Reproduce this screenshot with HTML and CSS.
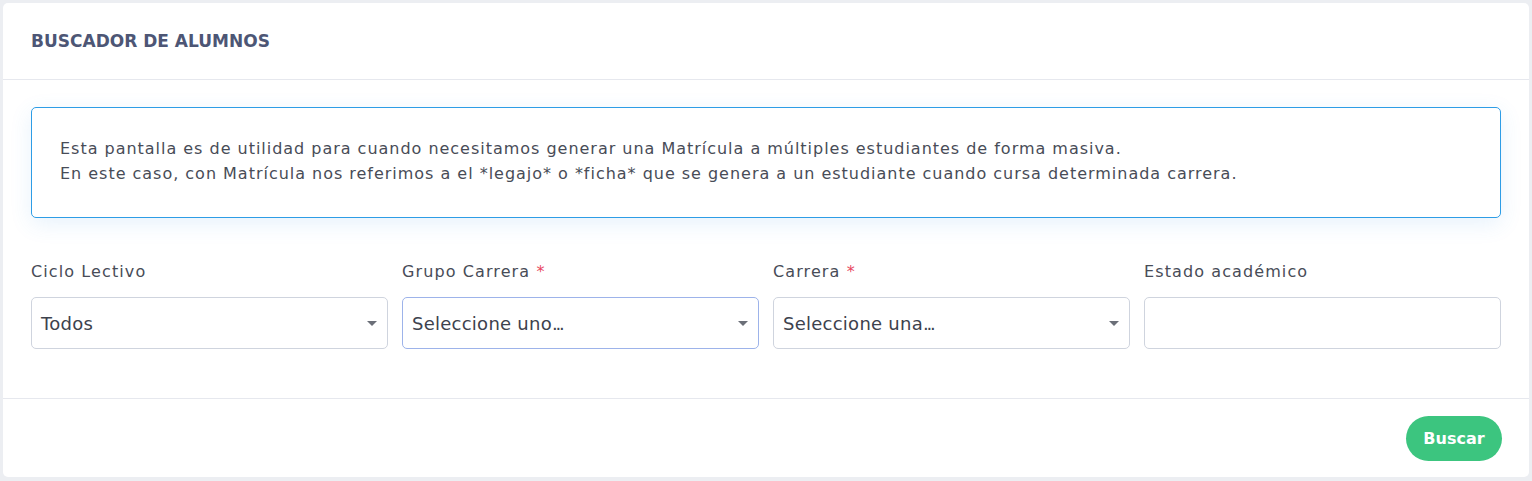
FILE: index.html
```html
<!DOCTYPE html>
<html lang="es">
<head>
<meta charset="utf-8">
<title>Buscador de alumnos</title>
<link rel="stylesheet" href="styles.css">
</head>
<body>
<div class="card">
  <div class="card-header">
    <h1 class="card-title">BUSCADOR DE ALUMNOS</h1>
  </div>
  <div class="card-body">
    <div class="alert">
      <p>Esta pantalla es de utilidad para cuando necesitamos generar una Matrícula a múltiples estudiantes de forma masiva.</p>
      <p>En este caso, con Matrícula nos referimos a el *legajo* o *ficha* que se genera a un estudiante cuando cursa determinada carrera.</p>
    </div>
    <div class="form-row">
      <div class="form-group">
        <label class="label">Ciclo Lectivo</label>
        <div class="select">
          <span class="select-text">Todos</span>
          <span class="caret"></span>
        </div>
      </div>
      <div class="form-group">
        <label class="label">Grupo Carrera <span class="req">*</span></label>
        <div class="select focused">
          <span class="select-text">Seleccione uno<span class="dots">...</span></span>
          <span class="caret"></span>
        </div>
      </div>
      <div class="form-group">
        <label class="label">Carrera <span class="req">*</span></label>
        <div class="select">
          <span class="select-text">Seleccione una<span class="dots">...</span></span>
          <span class="caret"></span>
        </div>
      </div>
      <div class="form-group">
        <label class="label">Estado académico</label>
        <div class="select empty"></div>
      </div>
    </div>
  </div>
  <div class="card-footer">
    <button class="btn-primary">Buscar</button>
  </div>
</div>
</body>
</html>
```
FILE: styles.css
```css
* { box-sizing: border-box; }
html, body { margin: 0; padding: 0; }
body {
  background: #eceef2;
  font-family: "DejaVu Sans", "Noto Sans", sans-serif;
  color: #484c57;
  padding: 3px 3px 4px 3px;
  height: 481px;
  overflow: hidden;
}
.card {
  background: #ffffff;
  border-radius: 5px;
  height: 474px;
  display: flex;
  flex-direction: column;
}
.card-header {
  height: 77px;
  padding: 0 28px;
  display: flex;
  align-items: center;
  border-bottom: 1px solid #e6e8ee;
}
.card-title {
  margin: 0;
  font-size: 17px;
  font-weight: 700;
  color: #4d5675;
  padding-bottom: 1px;
}
.card-body {
  padding: 27px 28px 0 28px;
  height: 319px;
  border-bottom: 1px solid #e6e8ee;
}
.alert {
  border: 1px solid #2e9de6;
  border-radius: 5px;
  padding: 28px 28px;
  height: 111px;
  box-shadow: 0 6px 22px rgba(60, 150, 230, 0.12);
  font-size: 16px;
  line-height: 25px;
  letter-spacing: 0.98px;
  color: #484c57;
}
.alert p { margin: 0; }
.form-row {
  display: grid;
  grid-template-columns: repeat(4, 1fr);
  column-gap: 14px;
  margin-top: 42px;
}
.form-group {
  display: flex;
  flex-direction: column;
}
.label {
  font-size: 16px;
  line-height: 24px;
  letter-spacing: 1.1px;
  color: #484c57;
  margin-bottom: 13px;
}
.req { color: #e8475f; }
.select {
  height: 52px;
  border: 1px solid #cfd4de;
  border-radius: 5px;
  display: flex;
  align-items: center;
  justify-content: space-between;
  padding: 0 10px 0 9px;
}
.select.focused { border-color: #9db3ea; }
.select-text {
  font-size: 18px;
  letter-spacing: 0.25px;
  color: #3d424d;
}
.dots { letter-spacing: -2.2px; }
.caret {
  width: 0;
  height: 0;
  border-left: 5px solid transparent;
  border-right: 5px solid transparent;
  border-top: 5px solid #6b6f78;
}
.card-footer {
  flex: 1;
  display: flex;
  justify-content: flex-end;
  align-items: flex-start;
  padding: 17px 27px 0 28px;
}
.btn-primary {
  background: #3cc57f;
  color: #ffffff;
  border: none;
  border-radius: 23px;
  width: 96px;
  height: 45px;
  font-family: inherit;
  font-size: 16px;
  font-weight: 700;
  padding: 0;
}
```
